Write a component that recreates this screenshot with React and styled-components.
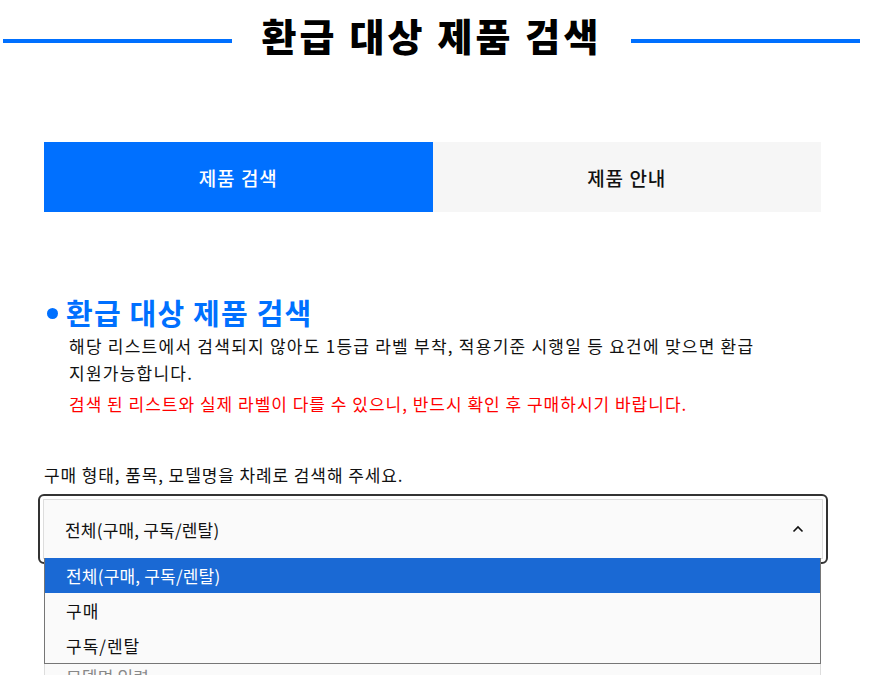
import React from "react";
import styled, { createGlobalStyle } from "styled-components";

const GlobalStyle = createGlobalStyle`
  html, body {
    margin: 0;
    padding: 0;
    background: #ffffff;
  }
  body {
    font-family: "Noto Sans CJK KR", "Noto Sans", sans-serif;
    color: #111111;
  }
`;

const Page = styled.div`
  width: 872px;
  height: 675px;
  overflow: hidden;
`;

const Header = styled.div`
  display: flex;
  align-items: center;
  gap: 30px;
  padding: 7px 12px 0 3px;
  height: 55px;
`;

const Line = styled.div`
  flex: 1;
  height: 4px;
  background: #0070ff;
  margin-top: 13px;
`;

const Title = styled.h1`
  margin: 0;
  font-size: 38px;
  font-weight: 900;
  letter-spacing: 3.1px;
  line-height: 1;
  color: #000000;
  white-space: nowrap;
`;

const Content = styled.div`
  width: 777px;
  margin-left: 44px;
`;

const Tabs = styled.div`
  display: flex;
  margin-top: 80px;
  height: 70px;
`;

const Tab = styled.div`
  flex: 1;
  display: flex;
  align-items: center;
  justify-content: center;
  font-size: 19px;
  font-weight: 500;
  letter-spacing: 1px;
  background: ${(p) => (p.$active ? "#0070ff" : "#f6f6f6")};
  color: ${(p) => (p.$active ? "#ffffff" : "#111111")};
`;

const SectionTitle = styled.h2`
  display: flex;
  align-items: center;
  gap: 8px;
  margin: 82px 0 0 3px;
  font-size: 29px;
  font-weight: 700;
  letter-spacing: 1.2px;
  line-height: 36px;
  color: #0070ff;
`;

const Dot = styled.span`
  width: 11px;
  height: 11px;
  border-radius: 50%;
  background: #0070ff;
  margin-top: 3px;
`;

const Desc = styled.p`
  margin: ${(p) => (p.$warn ? "4px" : "2px")} 0 0 25px;
  width: 700px;
  font-size: 17px;
  line-height: 27px;
  letter-spacing: ${(p) => (p.$warn ? "1px" : "1.25px")};
  color: ${(p) => (p.$warn ? "#ff0000" : "#111111")};
`;

const Guide = styled.p`
  margin: 46px 0 0 0;
  font-size: 17px;
  line-height: 24px;
  letter-spacing: 0.9px;
`;

const SelectWrap = styled.div`
  position: relative;
  margin-top: 12px;
`;

const Focus = styled.div`
  padding: 3px;
  border: 2px solid #333333;
  border-radius: 6px;
  margin: -5px -7px 0 -6px;
`;

const SelectBox = styled.div`
  display: flex;
  align-items: center;
  justify-content: space-between;
  height: 58px;
  padding: 0 16px 0 21px;
  border: 1px solid #dddddd;
  background: #fafafa;
  font-size: 17px;
  letter-spacing: 0.2px;
  color: ${(p) => (p.$placeholder ? "#888888" : "#111111")};
`;

const Chevron = styled.svg`
  width: 12px;
  height: 8px;
  margin-right: 2px;
`;

const List = styled.ul`
  position: absolute;
  left: 0;
  right: 0;
  top: 64px;
  margin: 0;
  padding: 0;
  list-style: none;
  background: #fafafa;
  border: 1px solid #767676;
  border-top: none;
  z-index: 2;
`;

const Option = styled.li`
  height: 35px;
  display: flex;
  align-items: center;
  padding-left: 21px;
  font-size: 17px;
  letter-spacing: ${(p) => (p.$selected ? "0.2px" : "1px")};
  background: ${(p) => (p.$selected ? "#1a69d4" : "transparent")};
  color: ${(p) => (p.$selected ? "#ffffff" : "#111111")};
`;

const Field = styled.div`
  margin-top: 11px;
`;

export default function App() {
  return (
    <Page>
      <GlobalStyle />
      <Header>
        <Line />
        <Title>환급 대상 제품 검색</Title>
        <Line />
      </Header>
      <Content>
        <Tabs>
          <Tab $active>제품 검색</Tab>
          <Tab>제품 안내</Tab>
        </Tabs>
        <SectionTitle>
          <Dot />
          환급 대상 제품 검색
        </SectionTitle>
        <Desc>
          해당 리스트에서 검색되지 않아도 1등급 라벨 부착, 적용기준 시행일 등 요건에 맞으면 환급
          지원가능합니다.
        </Desc>
        <Desc $warn>
          검색 된 리스트와 실제 라벨이 다를 수 있으니, 반드시 확인 후 구매하시기 바랍니다.
        </Desc>
        <Guide>구매 형태, 품목, 모델명을 차례로 검색해 주세요.</Guide>
        <SelectWrap>
          <Focus>
            <SelectBox>
              전체(구매, 구독/렌탈)
              <Chevron viewBox="0 0 12 8">
                <polyline points="1.5,6.5 6,2 10.5,6.5" fill="none" stroke="#111" strokeWidth="1.6" />
              </Chevron>
            </SelectBox>
          </Focus>
          <List>
            <Option $selected>전체(구매, 구독/렌탈)</Option>
            <Option>구매</Option>
            <Option>구독/렌탈</Option>
          </List>
        </SelectWrap>
        <Field>
          <SelectBox $placeholder>품목 선택</SelectBox>
        </Field>
        <Field>
          <SelectBox $placeholder>모델명 입력</SelectBox>
        </Field>
      </Content>
    </Page>
  );
}
